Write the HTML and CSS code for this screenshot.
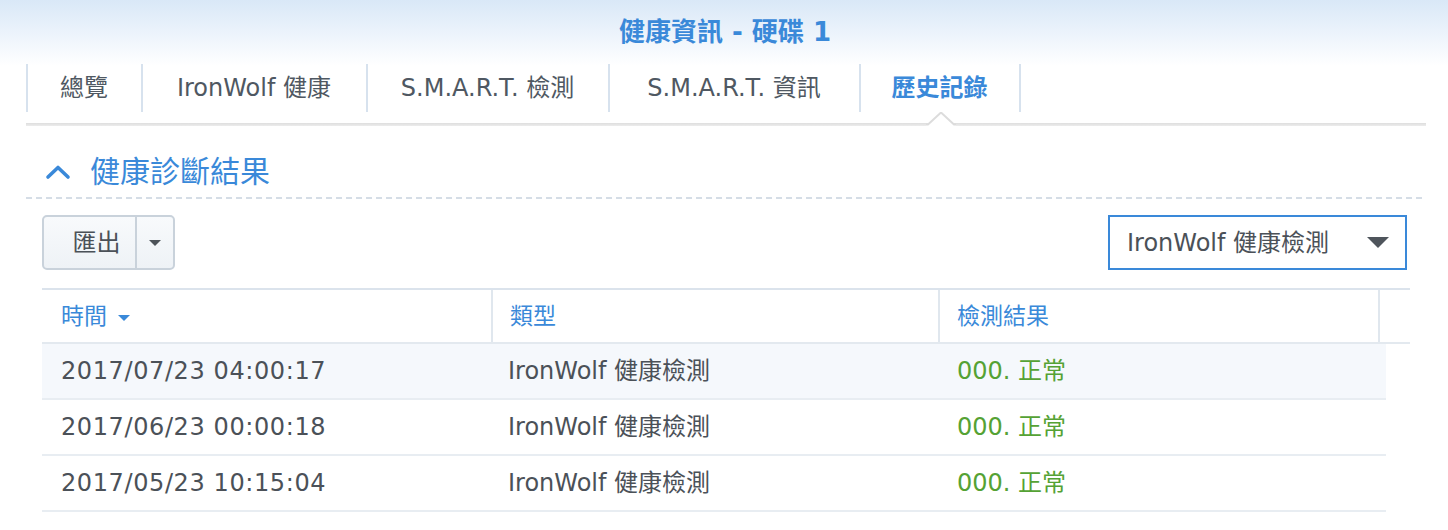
FILE: index.html
```html
<!DOCTYPE html>
<html lang="zh-Hant">
<head>
<meta charset="utf-8">
<title>健康資訊 - 硬碟 1</title>
<link rel="stylesheet" href="styles.css">
</head>
<body>
<div class="window">
  <header class="titlebar">
    <h1 class="title">健康資訊 - 硬碟 1</h1>
  </header>

  <nav class="tabbar">
    <div class="tabs">
      <div class="tab">總覽</div>
      <div class="tab">IronWolf 健康</div>
      <div class="tab">S.M.A.R.T. 檢測</div>
      <div class="tab">S.M.A.R.T. 資訊</div>
      <div class="tab active">歷史記錄
        <svg class="notch" width="30" height="15" viewBox="0 0 30 15"><path d="M0 13 L2 13 L15 1 L28 13 L30 13 L30 15 L0 15 Z" fill="#fff"/><path d="M0 12.5 L2 12.5 L15 0.5 L28 12.5 L30 12.5" fill="none" stroke="#dcdcdc" stroke-width="2"/></svg>
      </div>
    </div>
    <div class="tabline"></div>
  </nav>

  <section class="panel">
    <div class="section-head">
      <svg class="chevron" width="26" height="16" viewBox="0 0 26 16"><polyline points="3,13 13,3.5 23,13" fill="none" stroke="#3a89d9" stroke-width="3.6" stroke-linecap="round" stroke-linejoin="round"/></svg>
      <span class="section-title">健康診斷結果</span>
    </div>
    <div class="dashed"></div>

    <div class="content">
      <div class="toolbar">
        <div class="split-btn">
          <span class="btn-main">匯出</span>
          <span class="btn-arrow"><svg width="12" height="7" viewBox="0 0 12 7"><path d="M0 0 H12 L6 6 Z" fill="#4d5359"/></svg></span>
        </div>
        <div class="select">
          <span class="select-text">IronWolf 健康檢測</span>
          <svg width="22" height="12" viewBox="0 0 22 12"><path d="M0 0 H22 L11 11 Z" fill="#4f555c"/></svg>
        </div>
      </div>

      <div class="grid">
        <div class="grid-head">
          <div class="hcell c1">時間 <svg class="sort" width="12" height="6" viewBox="0 0 12 6"><path d="M0 0 H12 L6 6 Z" fill="#3a89d9"/></svg></div>
          <div class="hcell c2">類型</div>
          <div class="hcell c3">檢測結果</div>
          <div class="hcell c4"></div>
        </div>
        <div class="row first">
          <div class="cell c1">2017/07/23 04:00:17</div>
          <div class="cell c2">IronWolf 健康檢測</div>
          <div class="cell c3 ok">000. 正常</div>
        </div>
        <div class="row">
          <div class="cell c1">2017/06/23 00:00:18</div>
          <div class="cell c2">IronWolf 健康檢測</div>
          <div class="cell c3 ok">000. 正常</div>
        </div>
        <div class="row">
          <div class="cell c1">2017/05/23 10:15:04</div>
          <div class="cell c2">IronWolf 健康檢測</div>
          <div class="cell c3 ok">000. 正常</div>
        </div>
      </div>
    </div>
  </section>
</div>
</body>
</html>
```

FILE: styles.css
```css
* { box-sizing: border-box; }
html, body { margin: 0; padding: 0; }
body {
  background: #fff;
  font-family: "DejaVu Sans", "Noto Sans CJK TC", sans-serif;
  font-size: 24px;
  color: #4b5158;
  width: 1448px;
  height: 530px;
  overflow: hidden;
}
.window {
  background: linear-gradient(to bottom, #d9e8f7 0px, #eaf2fb 30px, #ffffff 66px, #ffffff 100%);
  height: 530px;
}
.titlebar {
  height: 64px;
  display: flex;
  align-items: center;
  justify-content: center;
}
.title {
  margin: 0;
  padding-left: 2px;
  font-size: 26px;
  font-weight: bold;
  color: #3a89d9;
  line-height: 1;
}

.tabbar { margin: 0 22px 0 26px; }
.tabs {
  display: flex;
  height: 48px;
}
.tab {
  position: relative;
  display: flex;
  align-items: center;
  justify-content: center;
  padding: 0 33px 0 32px;
  border-left: 2px solid #d7e2ee;
  color: #4f5862;
  line-height: 1;
  white-space: nowrap;
}
.tab:nth-child(1) { width: 115px; }
.tab:nth-child(2) { width: 225px; }
.tab:nth-child(3) { width: 242px; }
.tab:nth-child(4) { width: 251px; }
.tab.active {
  width: 162px;
  border-right: 2px solid #d7e2ee;
  color: #3a89d9;
  font-weight: bold;
}
.notch {
  position: absolute;
  left: 65px;
  top: 48px;
}
.tabline {
  margin-top: 11px;
  height: 3px;
  background: linear-gradient(to bottom, #dedede, #ececec);
}

.panel { margin: 0 22px 0 26px; }
.section-head {
  height: 71px;
  display: flex;
  align-items: center;
  padding-left: 19px;
  padding-top: 21px;
}
.chevron { margin-right: 19px; }
.section-title {
  font-size: 30px;
  color: #3a89d9;
  line-height: 1;
}
.dashed {
  height: 2px;
  background: repeating-linear-gradient(to right, #d5dde6 0, #d5dde6 6px, transparent 6px, transparent 10px);
}

.content { padding: 16px 16px 0 16px; }
.toolbar {
  display: flex;
  justify-content: space-between;
  align-items: center;
  height: 55px;
  padding-right: 3px;
}
.split-btn {
  display: flex;
  height: 55px;
  width: 133px;
  border: 2px solid #c9d2db;
  border-radius: 5px;
  background: linear-gradient(to bottom, #f8fafc, #eef2f6);
}
.btn-main {
  width: 93px;
  display: flex;
  align-items: center;
  justify-content: center;
  padding-left: 14px;
  border-right: 2px solid #c9d2db;
  color: #4b5158;
  line-height: 1;
}
.btn-arrow {
  flex: 1;
  display: flex;
  align-items: center;
  justify-content: center;
  padding-top: 2px;
}
.select {
  width: 299px;
  height: 55px;
  border: 2px solid #3a89d9;
  background: #fff;
  display: flex;
  align-items: center;
  justify-content: space-between;
  padding: 0 16px 0 17px;
}
.select-text { line-height: 1; color: #4b5158; }

.grid { margin-top: 18px; }
.grid-head {
  display: flex;
  height: 56px;
  border-top: 2px solid #dbe3ec;
  border-bottom: 2px solid #e3e9ef;
}
.hcell {
  display: flex;
  align-items: center;
  padding-left: 17px;
  color: #3a89d9;
  font-size: 23px;
  line-height: 1;
}
.hcell + .hcell { border-left: 2px solid #e0e7ee; }
.sort { margin-left: 11px; margin-top: 3px; }
.grid-head .c1 { width: 449px; padding-left: 19px; }
.grid-head .c2 { width: 447px; }
.grid-head .c3 { width: 440px; }
.grid-head .c4 { width: 32px; }

.row {
  display: flex;
  width: 1344px;
  height: 56px;
  border-bottom: 2px solid #e8edf2;
}
.row.first { background: #f5f8fc; }
.cell {
  display: flex;
  align-items: center;
  padding-left: 19px;
  line-height: 1;
  white-space: nowrap;
}
.row .c1 { width: 449px; letter-spacing: 0.6px; }
.row .c2 { width: 447px; padding-left: 17px; }
.row .c3 { width: 448px; }
.ok { color: #55a234; }
```
